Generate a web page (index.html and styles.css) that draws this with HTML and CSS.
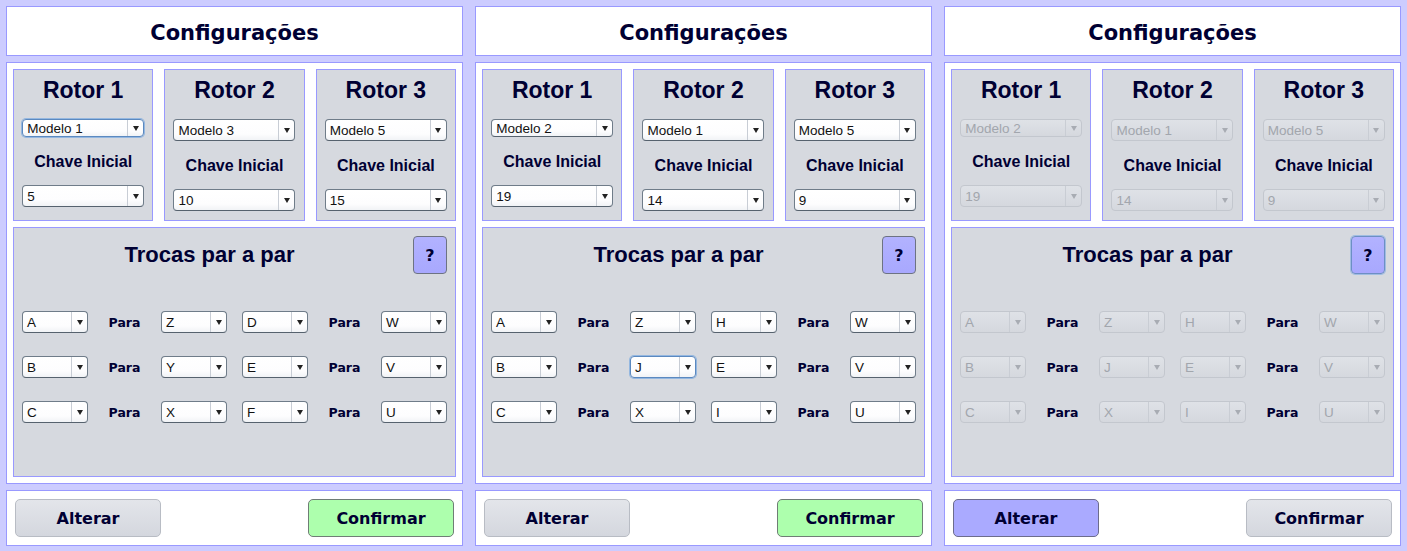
FILE: index.html
```html
<!DOCTYPE html>
<html lang="pt">
<head>
    <meta charset="UTF-8">
    <meta name="viewport" content="width=device-width, initial-scale=1.0">
    <title>Configurações</title>
    <link rel="stylesheet" href="styles.css">
</head>
<body>
<div class="app">

    <!-- Painel 1 -->
    <div class="panel">
        <div class="box header">Configurações</div>
        <div class="box main">
            <div class="rotors">
                <div class="rotor">
                    <h2>Rotor 1</h2>
                    <div class="combo short focus"><span>Modelo 1</span><i></i></div>
                    <div class="label">Chave Inicial</div>
                    <div class="combo key"><span>5</span><i></i></div>
                </div>
                <div class="rotor">
                    <h2>Rotor 2</h2>
                    <div class="combo"><span>Modelo 3</span><i></i></div>
                    <div class="label">Chave Inicial</div>
                    <div class="combo key"><span>10</span><i></i></div>
                </div>
                <div class="rotor">
                    <h2>Rotor 3</h2>
                    <div class="combo"><span>Modelo 5</span><i></i></div>
                    <div class="label">Chave Inicial</div>
                    <div class="combo key"><span>15</span><i></i></div>
                </div>
            </div>
            <div class="trocas">
                <div class="trocas-head">
                    <h2>Trocas par a par</h2>
                    <button class="help">?</button>
                </div>
                <div class="pairs">
                    <div class="group">
                        <div class="combo"><span>A</span><i></i></div><div class="para">Para</div><div class="combo"><span>Z</span><i></i></div>
                        <div class="combo"><span>B</span><i></i></div><div class="para">Para</div><div class="combo"><span>Y</span><i></i></div>
                        <div class="combo"><span>C</span><i></i></div><div class="para">Para</div><div class="combo"><span>X</span><i></i></div>
                    </div>
                    <div class="group">
                        <div class="combo"><span>D</span><i></i></div><div class="para">Para</div><div class="combo"><span>W</span><i></i></div>
                        <div class="combo"><span>E</span><i></i></div><div class="para">Para</div><div class="combo"><span>V</span><i></i></div>
                        <div class="combo"><span>F</span><i></i></div><div class="para">Para</div><div class="combo"><span>U</span><i></i></div>
                    </div>
                </div>
            </div>
        </div>
        <div class="box actions">
            <button class="btn">Alterar</button>
            <button class="btn green">Confirmar</button>
        </div>
    </div>

    <!-- Painel 2 -->
    <div class="panel">
        <div class="box header">Configurações</div>
        <div class="box main">
            <div class="rotors">
                <div class="rotor">
                    <h2>Rotor 1</h2>
                    <div class="combo short"><span>Modelo 2</span><i></i></div>
                    <div class="label">Chave Inicial</div>
                    <div class="combo key"><span>19</span><i></i></div>
                </div>
                <div class="rotor">
                    <h2>Rotor 2</h2>
                    <div class="combo"><span>Modelo 1</span><i></i></div>
                    <div class="label">Chave Inicial</div>
                    <div class="combo key"><span>14</span><i></i></div>
                </div>
                <div class="rotor">
                    <h2>Rotor 3</h2>
                    <div class="combo"><span>Modelo 5</span><i></i></div>
                    <div class="label">Chave Inicial</div>
                    <div class="combo key"><span>9</span><i></i></div>
                </div>
            </div>
            <div class="trocas">
                <div class="trocas-head">
                    <h2>Trocas par a par</h2>
                    <button class="help">?</button>
                </div>
                <div class="pairs">
                    <div class="group">
                        <div class="combo"><span>A</span><i></i></div><div class="para">Para</div><div class="combo"><span>Z</span><i></i></div>
                        <div class="combo"><span>B</span><i></i></div><div class="para">Para</div><div class="combo focus"><span>J</span><i></i></div>
                        <div class="combo"><span>C</span><i></i></div><div class="para">Para</div><div class="combo"><span>X</span><i></i></div>
                    </div>
                    <div class="group">
                        <div class="combo"><span>H</span><i></i></div><div class="para">Para</div><div class="combo"><span>W</span><i></i></div>
                        <div class="combo"><span>E</span><i></i></div><div class="para">Para</div><div class="combo"><span>V</span><i></i></div>
                        <div class="combo"><span>I</span><i></i></div><div class="para">Para</div><div class="combo"><span>U</span><i></i></div>
                    </div>
                </div>
            </div>
        </div>
        <div class="box actions">
            <button class="btn">Alterar</button>
            <button class="btn green">Confirmar</button>
        </div>
    </div>

    <!-- Painel 3 (bloqueado) -->
    <div class="panel locked">
        <div class="box header">Configurações</div>
        <div class="box main">
            <div class="rotors">
                <div class="rotor">
                    <h2>Rotor 1</h2>
                    <div class="combo short"><span>Modelo 2</span><i></i></div>
                    <div class="label">Chave Inicial</div>
                    <div class="combo key"><span>19</span><i></i></div>
                </div>
                <div class="rotor">
                    <h2>Rotor 2</h2>
                    <div class="combo"><span>Modelo 1</span><i></i></div>
                    <div class="label">Chave Inicial</div>
                    <div class="combo key"><span>14</span><i></i></div>
                </div>
                <div class="rotor">
                    <h2>Rotor 3</h2>
                    <div class="combo"><span>Modelo 5</span><i></i></div>
                    <div class="label">Chave Inicial</div>
                    <div class="combo key"><span>9</span><i></i></div>
                </div>
            </div>
            <div class="trocas">
                <div class="trocas-head">
                    <h2>Trocas par a par</h2>
                    <button class="help focus">?</button>
                </div>
                <div class="pairs">
                    <div class="group">
                        <div class="combo"><span>A</span><i></i></div><div class="para">Para</div><div class="combo"><span>Z</span><i></i></div>
                        <div class="combo"><span>B</span><i></i></div><div class="para">Para</div><div class="combo"><span>J</span><i></i></div>
                        <div class="combo"><span>C</span><i></i></div><div class="para">Para</div><div class="combo"><span>X</span><i></i></div>
                    </div>
                    <div class="group">
                        <div class="combo"><span>H</span><i></i></div><div class="para">Para</div><div class="combo"><span>W</span><i></i></div>
                        <div class="combo"><span>E</span><i></i></div><div class="para">Para</div><div class="combo"><span>V</span><i></i></div>
                        <div class="combo"><span>I</span><i></i></div><div class="para">Para</div><div class="combo"><span>U</span><i></i></div>
                    </div>
                </div>
            </div>
        </div>
        <div class="box actions">
            <button class="btn purple">Alterar</button>
            <button class="btn">Confirmar</button>
        </div>
    </div>

</div>
</body>
</html>
```

FILE: styles.css
```css
* {
    box-sizing: border-box;
}

body {
    margin: 0;
    background-color: #ccccff;
    font-family: "Liberation Sans", Arial, sans-serif;
    color: #000033;
}

.app {
    display: grid;
    grid-template-columns: repeat(3, 1fr);
    height: 551px;
}

.panel {
    display: flex;
    flex-direction: column;
    gap: 6px;
    padding: 6px 6px 5px;
}

.box {
    background-color: #fff;
    border: 1px solid #9999ff;
}

.header {
    height: 50px;
    padding-top: 3px;
    display: flex;
    justify-content: center;
    align-items: center;
    font: bold 21px "DejaVu Sans", sans-serif;
}

.main {
    flex: 1;
    padding: 6px;
    display: flex;
    flex-direction: column;
    gap: 6px;
}

/* Rotores */
.rotors {
    display: grid;
    grid-template-columns: repeat(3, 1fr);
    gap: 11px;
    height: 152px;
}

.rotor {
    background-color: #d6d9df;
    border: 1px solid #9999ff;
    display: flex;
    flex-direction: column;
    align-items: center;
}

.rotor h2 {
    margin: 6px 0 0;
    font-size: 23px;
    line-height: 28px;
}

.rotor .combo {
    width: 122px;
    margin-top: 15px;
}

.rotor .label {
    margin-top: 15px;
    font-weight: bold;
    font-size: 16px;
    line-height: 20px;
}

.rotor .combo.key {
    margin-top: 13px;
}

/* Combo box */
.combo {
    display: flex;
    height: 22px;
    background: linear-gradient(#fff, #fdfdfe 70%, #f1f3f6);
    border: 1px solid #6f7c89;
    border-bottom-color: #56626e;
    border-radius: 4px;
    font-size: 13.5px;
    color: #111;
}

.combo.short {
    height: 18px;
}

.combo span {
    flex: 1;
    padding-left: 4px;
    display: flex;
    align-items: center;
}

.combo i {
    width: 16px;
    border-left: 1px solid #c8cdd5;
    display: flex;
    justify-content: center;
    align-items: center;
}

.combo i::after {
    content: "";
    border-left: 3.5px solid transparent;
    border-right: 3.5px solid transparent;
    border-top: 5px solid #222;
}

.combo.focus {
    border-color: #5b89c0;
    box-shadow: 0 0 0 1px #94b7e0;
}

/* Trocas */
.trocas {
    flex: 1;
    background-color: #d6d9df;
    border: 1px solid #9999ff;
}

.trocas-head {
    display: flex;
    align-items: center;
    padding: 8px 8px 0 0;
}

.trocas-head h2 {
    flex: 1;
    margin: 0;
    text-align: center;
    font-size: 22px;
}

.help {
    width: 34px;
    height: 38px;
    margin-left: 8px;
    padding: 0;
    background: linear-gradient(#b2b2ff, #a8a8fe);
    border: 1px solid #6d7383;
    border-radius: 4px;
    font: bold 16px "DejaVu Sans", sans-serif;
    color: #000033;
}

.help.focus {
    border-color: #6d8fc4;
    box-shadow: 0 0 0 1px #9fbce2;
}

.pairs {
    display: flex;
    justify-content: space-between;
    padding: 0 8px;
    margin-top: 37px;
}

.group {
    display: grid;
    grid-template-columns: 66px 73px 66px;
    row-gap: 23px;
    align-items: center;
}

.para {
    text-align: center;
    font: bold 12.5px "DejaVu Sans", sans-serif;
}

/* Botões */
.actions {
    height: 56px;
    display: flex;
    justify-content: space-between;
    padding: 8px;
}

.btn {
    width: 146px;
    background: linear-gradient(#e3e5ea, #d4d7de);
    border: 1px solid #b8bcc4;
    border-radius: 5px;
    font: bold 16px "DejaVu Sans", sans-serif;
    color: #000033;
}

.btn.green {
    background: #adffad;
    border-color: #6f7d75;
}

.btn.purple {
    background: #aaaaff;
    border-color: #6c6c8c;
}

/* Painel bloqueado */
.locked .combo {
    background: linear-gradient(#dfe2e7, #d5d8de);
    border-color: #c3c7ce;
    color: #a2a6ad;
}

.locked .combo i {
    border-left-color: #c9cdd4;
}

.locked .combo i::after {
    border-top-color: #a8acb3;
}
```
